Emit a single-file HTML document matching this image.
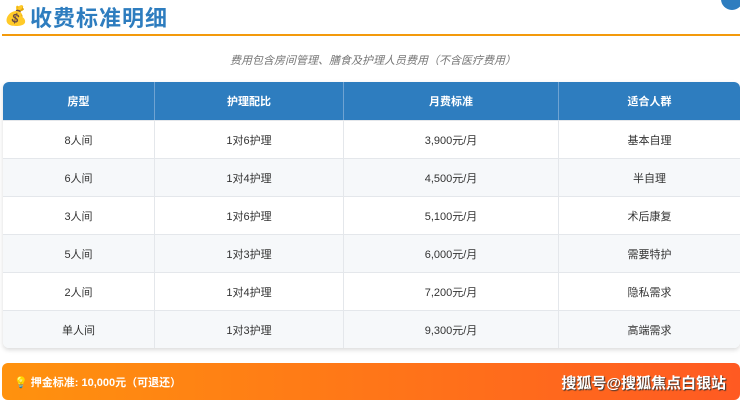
<!DOCTYPE html>
<html><head><meta charset="utf-8"><style>
body{margin:0;width:740px;height:401px;background:#fff;font-family:"Liberation Sans","Noto Sans CJK SC",sans-serif;position:relative;overflow:hidden}
.title{position:absolute;left:30px;top:1px;font-size:22px;font-weight:bold;color:#2e7dbf;letter-spacing:1px}
.bag{position:absolute;left:4px;top:4px;font-size:19px}
.line{position:absolute;left:2px;top:34px;width:738px;height:2px;background:#f39a0c}
.circ{position:absolute;left:721px;top:-12px;width:22px;height:22px;border-radius:50%;background:#2e7dbf}
.note{position:absolute;left:0;width:746px;top:52px;text-align:center;font-size:11px;font-style:italic;color:#777}
table{position:absolute;left:3px;top:82px;width:737px;table-layout:fixed;border-collapse:separate;border-spacing:0;border-radius:6px;overflow:hidden;box-shadow:0 2px 5px rgba(0,0,0,.15);font-size:11px;color:#333}
th{background:#2e7dbf;color:#fff;height:38px;padding:0;font-weight:bold;border-left:1px solid #6fa3d2}
td{height:37px;padding:0;text-align:center;border-top:1px solid #e4e7eb;border-left:1px solid #e4e7eb}
th:first-child,td:first-child{border-left:none}
tr:nth-child(odd) td{background:#f6f8fa}
.foot{position:absolute;left:2px;top:363px;width:738px;height:37px;border-radius:6px;background:linear-gradient(90deg,#ff920e,#ff5a22);color:#fff}
.foot .l{position:absolute;left:12px;top:11px;font-size:11px;font-weight:bold}
.foot .r{position:absolute;right:14px;top:9px;font-size:15px;font-weight:bold;text-shadow:1px 1px 1px #333}
</style></head><body>
<div class="bag">💰</div>
<div class="title">收费标准明细</div>
<div class="circ"></div>
<div class="line"></div>
<div class="note">费用包含房间管理、膳食及护理人员费用（不含医疗费用）</div>
<table>
<tr><th style="width:151px">房型</th><th style="width:188px">护理配比</th><th style="width:214px">月费标准</th><th>适合人群</th></tr>
<tr><td>8人间</td><td>1对6护理</td><td>3,900元/月</td><td>基本自理</td></tr>
<tr><td>6人间</td><td>1对4护理</td><td>4,500元/月</td><td>半自理</td></tr>
<tr><td>3人间</td><td>1对6护理</td><td>5,100元/月</td><td>术后康复</td></tr>
<tr><td>5人间</td><td>1对3护理</td><td>6,000元/月</td><td>需要特护</td></tr>
<tr><td>2人间</td><td>1对4护理</td><td>7,200元/月</td><td>隐私需求</td></tr>
<tr><td>单人间</td><td>1对3护理</td><td>9,300元/月</td><td>高端需求</td></tr>
</table>
<div class="foot"><div class="l">💡 押金标准: 10,000元（可退还）</div><div class="r">搜狐号@搜狐焦点白银站</div></div>
</body></html>
